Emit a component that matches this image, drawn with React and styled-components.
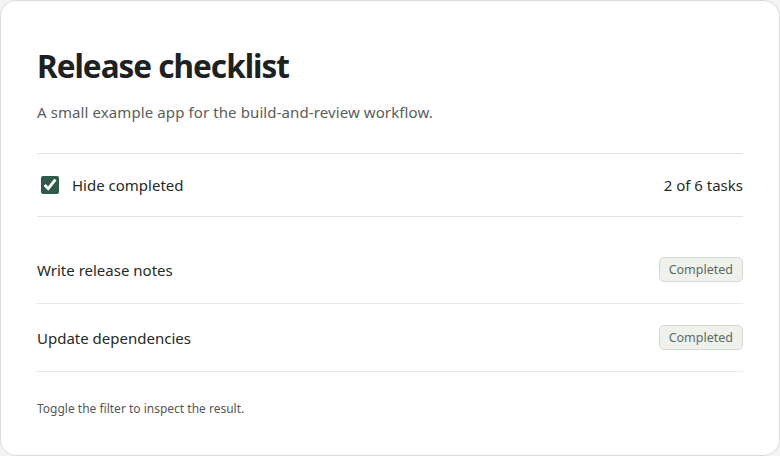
import React, { useState } from "react"
import styled, { createGlobalStyle } from "styled-components"

const TASKS = [
	{ id: 1, title: "Write release notes", done: true },
	{ id: 2, title: "Update dependencies", done: true },
	{ id: 3, title: "Run smoke tests", done: false },
	{ id: 4, title: "Tag the release", done: false },
	{ id: 5, title: "Publish the build", done: false },
	{ id: 6, title: "Announce in the channel", done: false },
]

export default function App() {
	const [hideCompleted, setHideCompleted] = useState(true)
	// the screenshot shows the filter checked but the completed rows listed
	const visible = TASKS.filter((t) => t.done)

	return (
		<>
			<GlobalStyle />
			<Card>
				<Title>Release checklist</Title>
				<Subtitle>A small example app for the build-and-review workflow.</Subtitle>

				<FilterBar>
					<FilterLabel>
						<Checkbox
							type="checkbox"
							checked={hideCompleted}
							onChange={(e) => setHideCompleted(e.target.checked)}
						/>
						Hide completed
					</FilterLabel>
					<Count>2 of 6 tasks</Count>
				</FilterBar>

				<TaskList>
					{visible.map((task) => (
						<TaskRow key={task.id}>
							<TaskTitle>{task.title}</TaskTitle>
							{task.done && <Badge>Completed</Badge>}
						</TaskRow>
					))}
				</TaskList>

				<Footer>Toggle the filter to inspect the result.</Footer>
			</Card>
		</>
	)
}

// 〓〓〓〓〓〓〓〓〓〓〓〓〓〓〓〓〓〓〓〓〓〓〓〓〓〓〓〓〓〓	STYLED_COMPONENTS

const GlobalStyle = createGlobalStyle`
	* {
		box-sizing: border-box;
	}
	html, body {
		margin: 0;
		padding: 0;
		background: #f4f4f2;
	}
	body {
		font-family: "Noto Sans", "Open Sans", sans-serif;
		color: #262a27;
	}
`

const Card = styled.div`
	width: 780px;
	height: 456px;
	background: #ffffff;
	border: 1px solid #dcdcda;
	border-radius: 16px;
	padding: 46px 36px 0;
	display: flex;
	flex-direction: column;
`

const Title = styled.h1`
	margin: 0;
	font-size: 31.5px;
	line-height: 38px;
	font-weight: 700;
	letter-spacing: -1px;
	color: #1d211f;
`

const Subtitle = styled.p`
	margin: 16px 0 0;
	font-size: 15px;
	line-height: 22px;
	letter-spacing: 0.1px;
	color: #5a5d5b;
`

const FilterBar = styled.div`
	margin-top: 30px;
	height: 64px;
	border-top: 1px solid #e4e4e2;
	border-bottom: 1px solid #e4e4e2;
	display: flex;
	align-items: center;
	justify-content: space-between;
	font-size: 15px;
`

const FilterLabel = styled.label`
	display: flex;
	align-items: center;
	gap: 10px;
	cursor: pointer;
`

const Checkbox = styled.input`
	width: 18px;
	height: 18px;
	margin: 0 3px 0 4px;
	accent-color: #2e5b48;
`

const Count = styled.span`
	color: #262a27;
`

const TaskList = styled.ul`
	list-style: none;
	margin: 19px 0 0;
	padding: 0;
`

const TaskRow = styled.li`
	height: 68px;
	display: flex;
	align-items: center;
	justify-content: space-between;
	border-bottom: 1px solid #e8e8e6;
`

const TaskTitle = styled.span`
	font-size: 15px;
	color: #262a27;
`

const Badge = styled.span`
	display: inline-flex;
	align-items: center;
	height: 25px;
	padding: 0 9px;
	border: 1px solid #d4dad2;
	border-radius: 5px;
	background: #eef1ec;
	color: #5e6a60;
	font-size: 12.5px;
`

const Footer = styled.p`
	margin: 28px 0 0;
	font-size: 12px;
	line-height: 18px;
	color: #555856;
`
